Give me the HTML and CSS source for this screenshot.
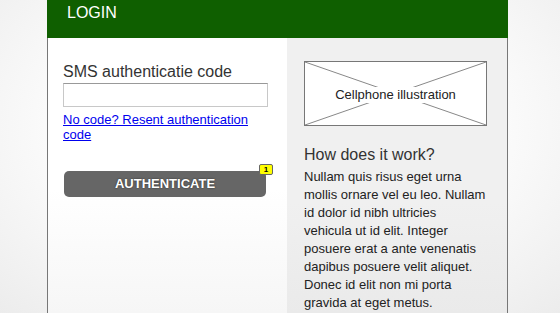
FILE: index.html
```html
<!DOCTYPE html>
<html lang="en">
  <head>
    <meta charset="UTF-8" />
    <meta name="viewport" content="width=device-width, initial-scale=1.0" />
    <title>Login</title>
    <link rel="stylesheet" href="styles.css">
  </head>
  <body>
    <div class="panel">
      <div class="header">LOGIN</div>
      <div class="columns">
        <div class="main">
          <label class="label" for="code">SMS authenticatie code</label>
          <input class="field" id="code" type="text" />
          <a class="resend" href="#">No code? Resent authentication code</a>
          <div class="actions">
            <button class="btn">AUTHENTICATE</button>
            <span class="badge">1</span>
          </div>
        </div>
        <div class="side">
          <div class="placeholder">
            <svg class="cross" viewBox="0 0 181 63" preserveAspectRatio="none">
              <line x1="0" y1="0" x2="181" y2="63" />
              <line x1="181" y1="0" x2="0" y2="63" />
            </svg>
            <span class="placeholder-text">Cellphone illustration</span>
          </div>
          <h2 class="title">How does it work?</h2>
          <p class="text">
            Nullam quis risus eget urna mollis ornare vel eu leo. Nullam id dolor id nibh ultricies
            vehicula ut id elit. Integer posuere erat a ante venenatis dapibus posuere velit aliquet.
            Donec id elit non mi porta gravida at eget metus.
          </p>
        </div>
      </div>
    </div>
  </body>
</html>
```
FILE: styles.css
```css
body {
  margin: 0;
  height: 313px;
  overflow: hidden;
  font-family: "Liberation Sans", Arial, sans-serif;
  background: radial-gradient(ellipse at 50% 40%, #ffffff 45%, #ececec 100%);
}

.panel {
  width: 461px;
  margin-left: 47px;
}

.header {
  height: 38px;
  padding: 3px 0 0 20px;
  box-sizing: border-box;
  background: #0f5f00;
  color: #fff;
  font-size: 16px;
  line-height: 19px;
}

.columns {
  display: flex;
  height: 275px;
  border-left: 1px solid #777;
  border-right: 1px solid #777;
}

.main {
  width: 239px;
  padding: 25px 0 0 15px;
  box-sizing: border-box;
  background: linear-gradient(#ffffff 55%, #f6f6f6);
}

.label {
  display: block;
  font-size: 16px;
  line-height: 18px;
  color: #333;
}

.field {
  display: block;
  width: 205px;
  height: 24px;
  margin-top: 2px;
  box-sizing: border-box;
  border: 1px solid #c8c8c8;
  border-top-color: #999;
  background: #fff;
}

.resend {
  display: block;
  width: 200px;
  margin-top: 5px;
  font-size: 13px;
  line-height: 15px;
  color: #00e;
}

.actions {
  position: relative;
  width: 202px;
  margin-top: 29px;
  margin-left: 1px;
}

.btn {
  display: block;
  width: 202px;
  height: 26px;
  padding: 0;
  border: none;
  border-radius: 5px;
  background: #666;
  color: #fff;
  font-family: inherit;
  font-size: 13px;
  font-weight: bold;
  line-height: 24px;
  text-shadow: 0 0 2px rgba(0, 0, 0, 0.6);
}

.badge {
  position: absolute;
  top: -7px;
  right: -7px;
  width: 14px;
  height: 11px;
  box-sizing: border-box;
  border: 1px solid #666;
  border-radius: 2px;
  background: #ff0;
  font-size: 8px;
  font-weight: bold;
  line-height: 9px;
  text-align: center;
  color: #000;
}

.side {
  width: 220px;
  padding: 23px 0 0 17px;
  box-sizing: border-box;
  background: linear-gradient(#f0f0f0 60%, #eaeaea);
}

.placeholder {
  position: relative;
  display: flex;
  align-items: center;
  justify-content: center;
  width: 183px;
  height: 65px;
  box-sizing: border-box;
  border: 1px solid #777;
  background: #fff;
}

.cross {
  position: absolute;
  top: 0;
  left: 0;
  width: 100%;
  height: 100%;
}

.cross line {
  stroke: #888;
  stroke-width: 1;
}

.placeholder-text {
  position: relative;
  top: 1px;
  padding: 0 4px;
  background: #fff;
  font-size: 13px;
  line-height: 16px;
  color: #222;
}

.title {
  margin: 19px 0 0;
  font-size: 16px;
  font-weight: normal;
  line-height: 20px;
  color: #333;
}

.text {
  width: 183px;
  margin: 3px 0 0;
  font-size: 13px;
  line-height: 18px;
  color: #222;
}
```
